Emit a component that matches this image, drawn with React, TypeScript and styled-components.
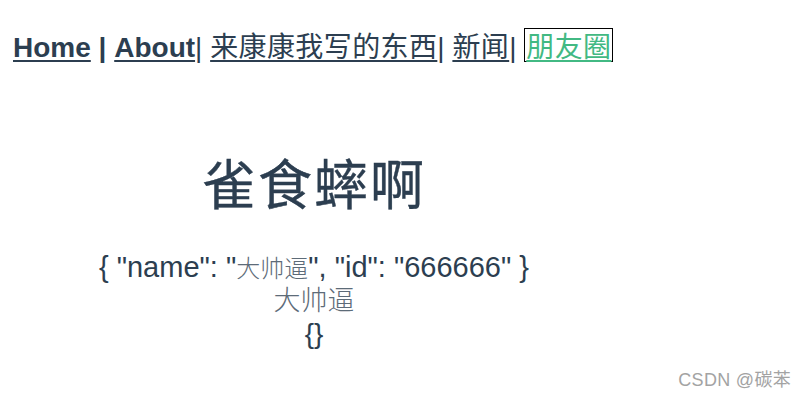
import styled, { createGlobalStyle } from "styled-components";

const GlobalStyle = createGlobalStyle`
  html, body {
    margin: 0;
    padding: 0;
    background: #ffffff;
  }
  body {
    width: 803px;
    height: 395px;
    overflow: hidden;
    position: relative;
  }
`;

const Page = styled.div`
  color: #2c3e50;
  font-family: "Liberation Sans", Arial, "Noto Sans CJK SC", sans-serif;
`;

const Nav = styled.nav`
  padding: 28px 0 0 13px;
  font-size: 28px;
  line-height: 32px;
  white-space: nowrap;
`;

const NavLink = styled.a<{ $cjk?: boolean; $active?: boolean }>`
  color: ${(p) => (p.$active ? "#42b983" : "#2c3e50")};
  font-weight: ${(p) => (p.$cjk ? 400 : 700)};
  font-family: ${(p) =>
    p.$cjk
      ? '"Noto Sans CJK SC", sans-serif'
      : '"Liberation Sans", Arial, sans-serif'};
  letter-spacing: ${(p) => (p.$cjk ? "0.4px" : "0")};
  text-decoration: underline;
  text-decoration-thickness: 2px;
  text-underline-offset: 3px;
  cursor: pointer;
  ${(p) =>
    p.$active &&
    `
    display: inline-block;
    border: 1px solid #000;
    padding: 0 1px;
    line-height: 32px;
  `}
`;

const Sep = styled.span<{ $bold?: boolean }>`
  font-weight: ${(p) => (p.$bold ? 700 : 400)};
`;

const Main = styled.main`
  width: 628px;
  text-align: center;
`;

const Title = styled.h1`
  margin: 86px 0 0;
  font-family: "Noto Sans CJK SC", sans-serif;
  font-size: 54px;
  font-weight: 400;
  line-height: 64px;
  letter-spacing: 2px;
  -webkit-text-stroke: 0.4px #2c3e50;
`;

const JsonLine = styled.div`
  margin-top: 36px;
  font-size: 29px;
  line-height: 34px;
`;

const Han = styled.span`
  font-family: "Noto Sans CJK SC", sans-serif;
  font-size: 24px;
  font-weight: 300;
  color: #5d6b78;
`;

const NameLine = styled.div`
  font-family: "Noto Sans CJK SC", sans-serif;
  font-size: 27px;
  font-weight: 300;
  line-height: 30px;
  color: #5d6b78;
`;

const EmptyLine = styled.div`
  font-size: 28px;
  line-height: 40px;
`;

const Watermark = styled.div`
  position: absolute;
  right: 12px;
  bottom: 4px;
  font-family: "Liberation Sans", Arial, "Noto Sans CJK SC", sans-serif;
  font-size: 18px;
  color: #a3a3a3;
  letter-spacing: 0.3px;
`;

function App() {
  const user = { name: "大帅逼", id: "666666" };
  return (
    <Page>
      <GlobalStyle />
      <Nav>
        <NavLink>Home</NavLink>
        <Sep $bold> | </Sep>
        <NavLink>About</NavLink>
        <Sep>| </Sep>
        <NavLink $cjk>来康康我写的东西</NavLink>
        <Sep>| </Sep>
        <NavLink $cjk>新闻</NavLink>
        <Sep>| </Sep>
        <NavLink $cjk $active>
          朋友圈
        </NavLink>
      </Nav>
      <Main>
        <Title>雀食蟀啊</Title>
        <JsonLine>
          {'{ "name": "'}
          <Han>{user.name}</Han>
          {`", "id": "${user.id}" }`}
        </JsonLine>
        <NameLine>{user.name}</NameLine>
        <EmptyLine>{"{}"}</EmptyLine>
      </Main>
      <Watermark>CSDN @碳苯</Watermark>
    </Page>
  );
}

export default App;
